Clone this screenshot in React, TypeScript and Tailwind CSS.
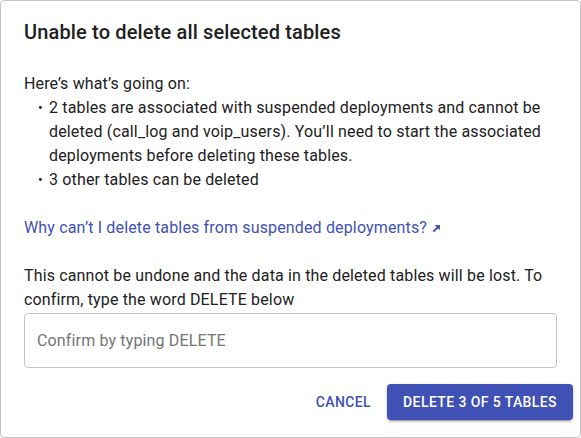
import React from 'react';

// bold north-east arrow next to the help link
const CallMade = () => (
  <svg viewBox="0 0 10 10" className="inline-block w-[9px] h-[9px] ml-[5px] align-[0px]">
    <path d="M1.5 8.5 L7 3" stroke="#3f51b5" strokeWidth="2.2" fill="none" />
    <path d="M3 1.2 H8.8 V7 Z" fill="#3f51b5" />
  </svg>
);

const App: React.FC = () => {
  return (
    <div className="w-[581px] h-[438px] bg-white border border-[#c4c4c4] rounded-[4px] flex flex-col font-['Roboto',sans-serif] text-[#212121] overflow-hidden">
      {/* Title */}
      <h2 className="pt-[15px] px-[23px] text-[20px] leading-[32px] font-medium tracking-[0.15px]">
        Unable to delete all selected tables
      </h2>

      {/* Content */}
      <div className="px-[23px] mt-[24px] text-[16px] leading-[24px] tracking-[0.15px]">
        <p>Here’s what’s going on:</p>
        <ul>
          <li className="flex">
            <span className="w-[25px] pl-[14px] shrink-0 text-[14px]">•</span>
            <span>
              2 tables are associated with suspended deployments and cannot be deleted (call_log and
              voip_users). You’ll need to start the associated deployments before deleting these tables.
            </span>
          </li>
          <li className="flex">
            <span className="w-[25px] pl-[14px] shrink-0 text-[14px]">•</span>
            <span>3 other tables can be deleted</span>
          </li>
        </ul>

        <a href="#" className="block mt-[24px] text-[#3f51b5]">
          Why can’t I delete tables from suspended deployments?
          <CallMade />
        </a>

        <p className="mt-[24px]">
          This cannot be undone and the data in the deleted tables will be lost. To confirm, type the word
          DELETE below
        </p>

        <input
          type="text"
          placeholder="Confirm by typing DELETE"
          className="mt-[1px] w-full h-[55px] px-[12px] border border-[#c4c4c4] rounded-[4px] text-[16px] text-[#212121] placeholder:text-[#757575] outline-none"
        />
      </div>

      {/* Actions */}
      <div className="mt-[16px] px-[7px] flex justify-end items-center gap-[8px]">
        <button className="h-[36px] px-[8px] rounded-[4px] text-[14px] font-medium uppercase tracking-[0.4px] text-[#3f51b5]">
          Cancel
        </button>
        <button className="h-[36px] px-[16px] rounded-[4px] bg-[#3f51b5] text-white text-[14px] font-medium uppercase tracking-[0.4px] shadow-[0_3px_1px_-2px_rgba(0,0,0,0.2),0_2px_2px_0_rgba(0,0,0,0.14),0_1px_5px_0_rgba(0,0,0,0.12)]">
          Delete 3 of 5 tables
        </button>
      </div>
    </div>
  );
};

export default App;
